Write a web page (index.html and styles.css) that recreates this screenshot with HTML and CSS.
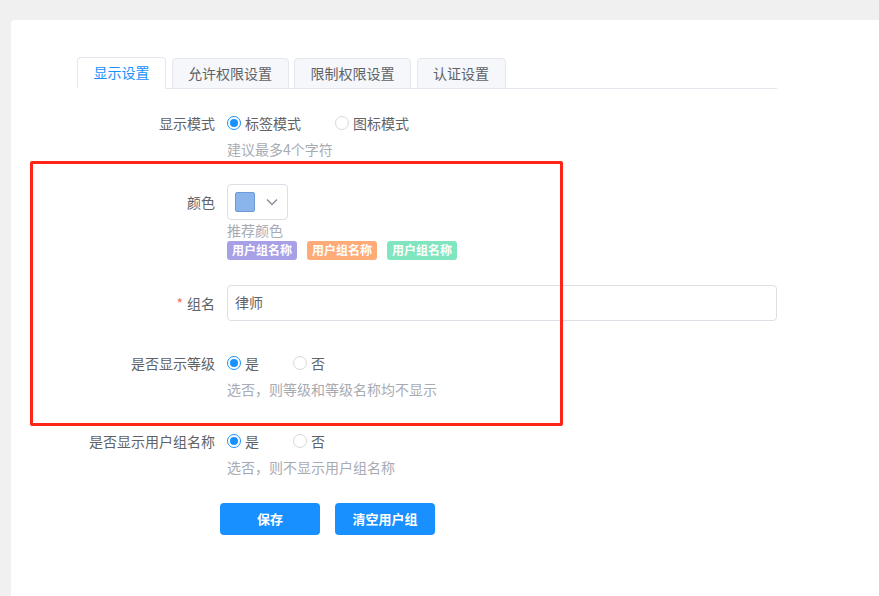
FILE: index.html
```html
<!DOCTYPE html>
<html lang="zh-CN">
<head>
<meta charset="utf-8">
<title>用户组设置</title>
<link rel="stylesheet" href="styles.css">
</head>
<body>
<div class="card">
  <div class="tabs">
    <div class="tab active">显示设置</div>
    <div class="tab">允许权限设置</div>
    <div class="tab">限制权限设置</div>
    <div class="tab">认证设置</div>
  </div>

  <div class="form">
    <div class="row r-mode">
      <div class="label">显示模式</div>
      <div class="ctrl">
        <label class="radio checked"><span class="dot"></span>标签模式</label>
        <label class="radio"><span class="dot"></span>图标模式</label>
      </div>
    </div>
    <div class="hint">建议最多4个字符</div>

    <div class="row r-color">
      <div class="label">颜色</div>
      <div class="ctrl">
        <div class="picker">
          <span class="swatch"></span>
          <svg class="chev" width="12" height="8" viewBox="0 0 12 8"><path d="M1 1.5 L6 6.5 L11 1.5" fill="none" stroke="#8a8f99" stroke-width="1.5"/></svg>
        </div>
      </div>
    </div>
    <div class="hint hint-tight">推荐颜色</div>
    <div class="tags">
      <span class="tag purple">用户组名称</span>
      <span class="tag orange">用户组名称</span>
      <span class="tag green">用户组名称</span>
    </div>

    <div class="row r-name">
      <div class="label"><span class="req">*</span>组名</div>
      <div class="ctrl">
        <div class="input">律师</div>
      </div>
    </div>

    <div class="row r-level">
      <div class="label">是否显示等级</div>
      <div class="ctrl">
        <label class="radio checked"><span class="dot"></span>是</label>
        <label class="radio"><span class="dot"></span>否</label>
      </div>
    </div>
    <div class="hint">选否，则等级和等级名称均不显示</div>

    <div class="row r-gname">
      <div class="label">是否显示用户组名称</div>
      <div class="ctrl">
        <label class="radio checked"><span class="dot"></span>是</label>
        <label class="radio"><span class="dot"></span>否</label>
      </div>
    </div>
    <div class="hint">选否，则不显示用户组名称</div>

    <div class="buttons">
      <button class="btn">保存</button>
      <button class="btn">清空用户组</button>
    </div>
  </div>

  <div class="annot"></div>
</div>
</body>
</html>
```

FILE: styles.css
```css
html, body {
  margin: 0;
  padding: 0;
  background: #f0f0f0;
  font-family: "Noto Sans CJK SC", "Noto Sans", sans-serif;
  font-size: 14px;
  color: #606266;
}
.card {
  position: relative;
  margin: 20px 0 0 11px;
  background: #fff;
  border-radius: 4px 0 0 0;
  height: 576px;
  padding: 37px 0 0 66px;
  box-sizing: border-box;
}
.tabs {
  display: flex;
  gap: 5.5px;
  width: 700px;
  border-bottom: 1px solid #e4e7ed;
  height: 31px;
  align-items: flex-end;
}
.tab {
  height: 31px;
  box-sizing: border-box;
  padding: 0 15.5px;
  border: 1px solid #e4e7ed;
  border-radius: 4px 4px 0 0;
  background: #f5f7fa;
  line-height: 28px;
  color: #606266;
  margin-bottom: -1px;
}
.tab.active {
  background: #fff;
  color: #1890ff;
  border-bottom-color: #fff;
  height: 32px;
}
.form {
  width: 700px;
}
.row {
  display: flex;
  align-items: center;
}
.label {
  width: 150px;
  padding-right: 12px;
  box-sizing: border-box;
  flex: 0 0 150px;
  text-align: right;
  line-height: 20px;
}
.ctrl {
  display: flex;
  align-items: center;
  line-height: 20px;
  flex: 1;
}
.r-mode { margin-top: 24px; }
.r-color { margin-top: 25px; }
.r-name { margin-top: 25px; }
.r-level { margin-top: 32px; }
.r-gname { margin-top: 32px; }
.hint {
  margin: 6px 0 0 150px;
  line-height: 20px;
  color: #a8abb2;
}
.hint.hint-tight { margin-top: 0; }
.radio {
  display: inline-flex;
  align-items: center;
  margin-right: 34px;
  color: #606266;
}
.radio .dot {
  width: 14px;
  height: 14px;
  box-sizing: border-box;
  border: 1px solid #d9d9d9;
  border-radius: 50%;
  margin-right: 4px;
  position: relative;
}
.radio.checked .dot {
  border-color: #1890ff;
}
.radio.checked .dot::after {
  content: "";
  position: absolute;
  left: 2px;
  top: 2px;
  width: 8px;
  height: 8px;
  border-radius: 50%;
  background: #1890ff;
}
.picker {
  width: 61px;
  height: 36px;
  box-sizing: border-box;
  border: 1px solid #dcdfe6;
  border-radius: 4px;
  display: flex;
  align-items: center;
  padding-left: 7px;
  gap: 11px;
}
.swatch {
  width: 20px;
  height: 20px;
  box-sizing: border-box;
  background: #8ab4ec;
  border: 1px solid #6e9bd6;
  border-radius: 2px;
}
.tags {
  display: flex;
  gap: 10px;
  margin: 1px 0 0 150px;
}
.tag {
  width: 70px;
  height: 19px;
  line-height: 18px;
  text-align: center;
  font-size: 12px;
  font-weight: bold;
  color: #fff;
  border-radius: 3px;
}
.tag.purple { background: #a7a0e6; }
.tag.orange { background: #ffab78; }
.tag.green { background: #80e6c0; }
.req {
  color: #f56c6c;
  margin-right: 4px;
}
.input {
  width: 550px;
  height: 36px;
  box-sizing: border-box;
  border: 1px solid #dcdfe6;
  border-radius: 4px;
  padding-left: 7px;
  line-height: 32px;
  color: #606266;
}
.buttons {
  display: flex;
  gap: 15px;
  margin: 26px 0 0 143px;
}
.btn {
  width: 100px;
  height: 32px;
  border: none;
  border-radius: 4px;
  background: #1890ff;
  color: #fff;
  font-family: inherit;
  font-size: 13px;
  font-weight: bold;
  padding: 0 0 2px;
}
.annot {
  position: absolute;
  left: 19px;
  top: 141px;
  width: 533px;
  height: 265px;
  box-sizing: border-box;
  border: 3px solid #ff2418;
  border-radius: 2px;
  pointer-events: none;
}
```
